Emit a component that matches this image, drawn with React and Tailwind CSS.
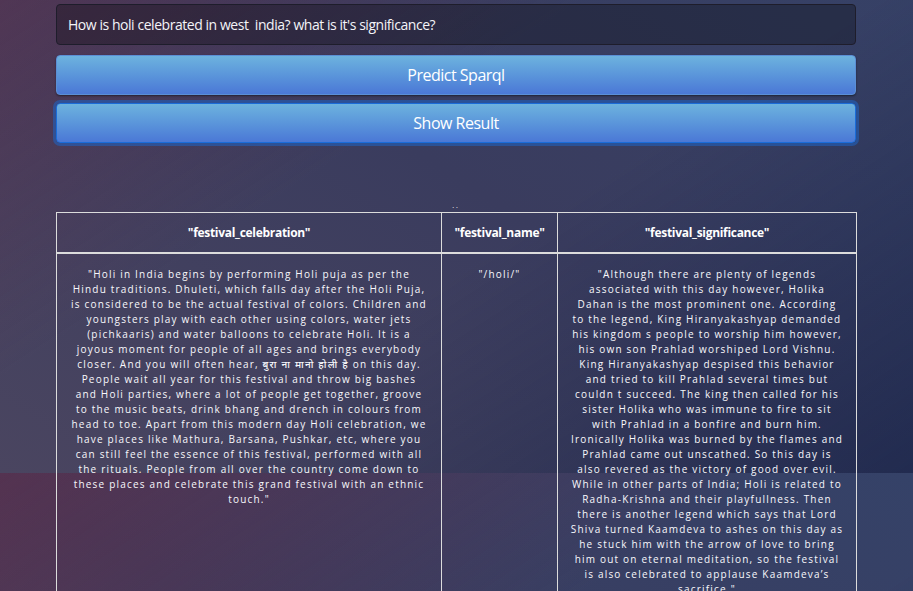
import React from 'react';

const celebrationLines = [
  '"Holi in India begins by performing Holi puja as per the',
  'Hindu traditions. Dhuleti, which falls day after the Holi Puja,',
  'is considered to be the actual festival of colors. Children and',
  'youngsters play with each other using colors, water jets',
  '(pichkaaris) and water balloons to celebrate Holi. It is a',
  'joyous moment for people of all ages and brings everybody',
  'closer. And you will often hear, बुरा ना मानो होली है on this day.',
  'People wait all year for this festival and throw big bashes',
  'and Holi parties, where a lot of people get together, groove',
  'to the music beats, drink bhang and drench in colours from',
  'head to toe. Apart from this modern day Holi celebration, we',
  'have places like Mathura, Barsana, Pushkar, etc, where you',
  'can still feel the essence of this festival, performed with all',
  'the rituals. People from all over the country come down to',
  'these places and celebrate this grand festival with an ethnic',
  'touch."',
];

const significanceLines = [
  '"Although there are plenty of legends',
  'associated with this day however, Holika',
  'Dahan is the most prominent one. According',
  'to the legend, King Hiranyakashyap demanded',
  'his kingdom s people to worship him however,',
  'his own son Prahlad worshiped Lord Vishnu.',
  'King Hiranyakashyap despised this behavior',
  'and tried to kill Prahlad several times but',
  'couldn t succeed. The king then called for his',
  'sister Holika who was immune to fire to sit',
  'with Prahlad in a bonfire and burn him.',
  'Ironically Holika was burned by the flames and',
  'Prahlad came out unscathed. So this day is',
  'also revered as the victory of good over evil.',
  'While in other parts of India; Holi is related to',
  'Radha-Krishna and their playfullness. Then',
  'there is another legend which says that Lord',
  'Shiva turned Kaamdeva to ashes on this day as',
  'he stuck him with the arrow of love to bring',
  'him out on eternal meditation, so the festival',
  'is also celebrated to applause Kaamdeva’s',
  'sacrifice."',
];

const Lines = ({ lines }) => (
  <>
    {lines.map((line, i) => (
      <span key={i} className="block whitespace-nowrap">{line}</span>
    ))}
  </>
);

const App = () => {
  return (
    <div
      className="min-h-[591px] text-white font-['Open_Sans','Noto_Sans','Noto_Sans_Devanagari',sans-serif] [background-image:linear-gradient(to_bottom_right,rgba(120,38,62,0.42)_0%,rgba(120,38,62,0)_42%,rgba(0,20,60,0)_58%,rgba(0,20,60,0.42)_100%),linear-gradient(to_top_right,#4a4560_0%,#3a3c5e_50%,#354268_100%)] [background-size:100%_591px] [background-position:0_-118px] bg-repeat-y"
    >
      <div className="w-[800px] ml-[56px] pt-1">
        {/* Question */}
        <div className="h-[41px] flex items-center px-[11px] rounded border border-[#1e1d2b] bg-[rgba(0,0,0,0.28)] text-[14px] tracking-[-0.45px] whitespace-pre text-[#f4f4f8]">
          How is holi celebrated in west  india? what is it's significance?
        </div>

        {/* Buttons */}
        <button className="mt-[10px] w-full h-[40px] rounded border border-[#5b8fd6] bg-gradient-to-b from-[#6db2de] to-[#4b78d6] shadow-[0_1px_2px_rgba(0,0,0,0.45)] text-[16px] tracking-[-0.5px] text-white">
          Predict Sparql
        </button>
        <button className="mt-[8px] w-full h-[40px] rounded border border-[#1b6cd8] bg-gradient-to-b from-[#6db2de] to-[#4b78d6] shadow-[0_0_0_3px_rgba(32,96,190,0.6)] text-[16px] tracking-[-0.5px] text-white">
          Show Result
        </button>

        <div className="mt-[61px] h-[8px] text-center text-[7px] leading-[4px] tracking-[2px] text-white">..</div>

        {/* Result table */}
        <table className="w-full table-fixed border-collapse border border-[#dcdcdc]">
          <colgroup>
            <col className="w-[385px]" />
            <col className="w-[116px]" />
            <col className="w-[299px]" />
          </colgroup>
          <thead>
            <tr className="h-[40px] border-b-2 border-[#dcdcdc] text-[12px] font-bold tracking-[-0.3px]">
              <th className="border border-[#dcdcdc] text-center pt-[2px]">"festival_celebration"</th>
              <th className="border border-[#dcdcdc] text-center pt-[2px]">"festival_name"</th>
              <th className="border border-[#dcdcdc] text-center pt-[2px]">"festival_significance"</th>
            </tr>
          </thead>
          <tbody>
            <tr className="align-top text-[10px] leading-[15px] tracking-[1.2px] font-medium text-center text-[#f8f8fc]">
              <td className="border border-[#dcdcdc] px-[6px] pt-[13px] pb-[30px]">
                <Lines lines={celebrationLines} />
              </td>
              <td className="border border-[#dcdcdc] px-[6px] pt-[13px]">"/holi/"</td>
              <td className="border border-[#dcdcdc] px-[4px] pt-[13px] pb-[30px]">
                <Lines lines={significanceLines} />
              </td>
            </tr>
          </tbody>
        </table>
      </div>
    </div>
  );
};

export default App;
